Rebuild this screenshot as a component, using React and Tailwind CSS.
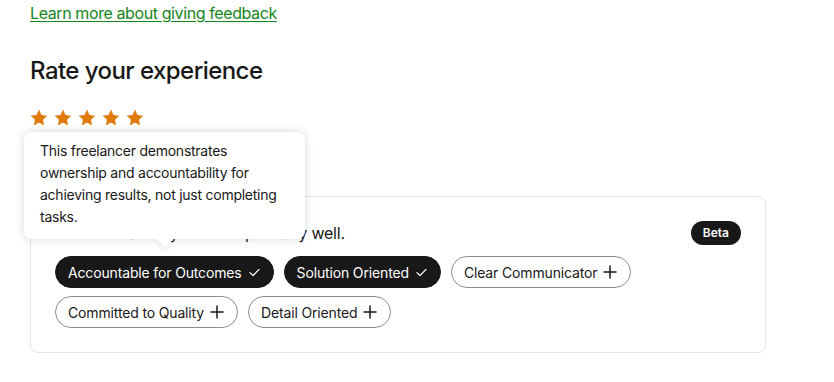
import React from "react";

const Star = () => (
  <svg width="18" height="17" viewBox="0 0 24 23" fill="#e07b0d">
    <path d="M12 0.8l3.4 7.2 7.8 1-5.7 5.4 1.4 7.8L12 18.4l-6.9 3.8 1.4-7.8L0.8 9l7.8-1z" />
  </svg>
);

const CheckIcon = () => (
  <svg width="11" height="9" viewBox="0 0 11 9" fill="none" stroke="currentColor" strokeWidth="1.3" strokeLinecap="round" strokeLinejoin="round">
    <path d="M1 4.6l3 3L10 1.4" />
  </svg>
);

const PlusIcon = () => (
  <svg width="14" height="14" viewBox="0 0 14 14" fill="none" stroke="currentColor" strokeWidth="1.5" strokeLinecap="round">
    <path d="M7 1v12M1 7h12" />
  </svg>
);

function Chip({ label, selected }) {
  if (selected) {
    return (
      <span className="inline-flex h-8 items-center gap-[7px] rounded-full border border-[#181818] bg-[#181818] pl-3 pr-[13px] text-[14px] tracking-[-0.15px] text-white">
        {label}
        <CheckIcon />
      </span>
    );
  }
  return (
    <span className="inline-flex h-8 items-center gap-[6px] rounded-full border border-[#8c8c8c] bg-white pl-3 pr-[13px] text-[14px] tracking-[-0.15px] text-[#181818]">
      {label}
      <PlusIcon />
    </span>
  );
}

export default function App() {
  return (
    <div
      className="relative min-h-[382px] bg-white pl-[30px] pr-[68px] text-[#181818]"
      style={{ fontFamily: "Inter, 'Liberation Sans', sans-serif" }}
    >
      <div className="h-6 pt-[1px] leading-6">
        <a href="#" className="text-[16px] tracking-[-0.4px] text-[#14861a] underline underline-offset-2">
          Learn more about giving feedback
        </a>
      </div>
      <h2 className="mt-[31px] text-[24px] font-medium leading-8 tracking-[-0.55px]">Rate your experience</h2>
      <div className="mt-[21px] flex h-[18px] items-center gap-[6px]">
        <Star />
        <Star />
        <Star />
        <Star />
        <Star />
      </div>
      <div className="mt-[70px] rounded-lg border border-[#e6e6e6] px-6 pt-6 pb-6">
        <div className="flex h-6 items-center justify-between">
          <p className="text-[16px] leading-6 tracking-[-0.2px]">Tell us what they did exceptionally well.</p>
          <span className="inline-flex h-6 items-center rounded-full bg-[#181818] px-[12px] text-[12px] font-semibold text-white">
            Beta
          </span>
        </div>
        <div className="mt-[11px] flex flex-wrap gap-x-[10px] gap-y-2">
          <Chip label="Accountable for Outcomes" selected />
          <Chip label="Solution Oriented" selected />
          <Chip label="Clear Communicator" />
          <Chip label="Committed to Quality" />
          <Chip label="Detail Oriented" />
        </div>
      </div>

      <div className="absolute left-6 top-[132px] w-[281px] rounded-lg bg-white px-4 pt-2 pb-[11px] text-[14px] leading-[22px] tracking-[-0.25px] text-[#181818] shadow-[0_0_10px_rgba(0,0,0,0.16)]">
        This freelancer demonstrates ownership and accountability for achieving results, not just completing tasks.
        <div className="absolute left-[135px] bottom-[-6px] h-3 w-3 rotate-45 bg-white shadow-[3px_3px_4px_rgba(0,0,0,0.06)]" />
      </div>
    </div>
  );
}
